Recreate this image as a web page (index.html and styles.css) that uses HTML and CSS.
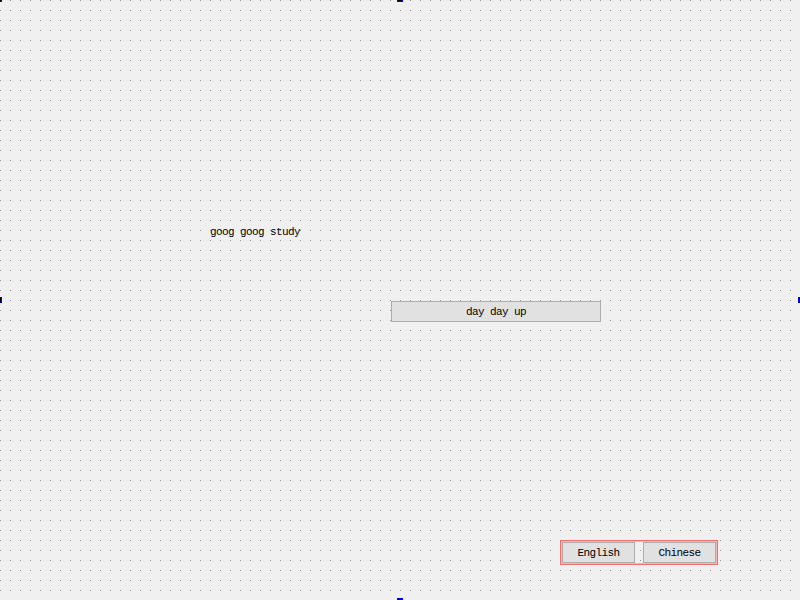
FILE: index.html
```html
<!DOCTYPE html>
<html>
<head>
<meta charset="utf-8">
<link rel="stylesheet" href="styles.css">
</head>
<body>
<div class="form">
  <div class="label">goog goog study</div>
  <div class="btn btn-wide">day day up</div>
  <div class="hlayout">
    <div class="btn btn-small">English</div>
    <div class="btn btn-small">Chinese</div>
  </div>
  <div class="handle h-tl"></div>
  <div class="handle h-tc"></div>
  <div class="handle h-ml"></div>
  <div class="handle h-mr"></div>
  <div class="handle h-bc"></div>
</div>
</body>
</html>
```
FILE: styles.css
```css
html, body {
  margin: 0;
  padding: 0;
  background: #f0f0f0;
}
.form {
  position: relative;
  width: 800px;
  height: 600px;
  overflow: hidden;
  background-color: #f0f0f0;
  background-image:
    linear-gradient(to right, transparent 1px, #f0f0f0 1px),
    linear-gradient(to bottom, #9a9a9a 1px, transparent 1px);
  background-size: 10px 10px;
  font-family: "Liberation Mono", "DejaVu Sans Mono", monospace;
  font-size: 11px;
  letter-spacing: -0.6px;
  color: #000;
}
.label {
  position: absolute;
  left: 210px;
  top: 224px;
  line-height: 16px;
}
.btn {
  box-sizing: border-box;
  background: #e1e1e1;
  border: 1px solid #adadad;
  display: flex;
  align-items: center;
  justify-content: center;
  line-height: 14px;
}
.btn-wide {
  position: absolute;
  left: 391px;
  top: 301px;
  width: 210px;
  height: 21px;
}
.hlayout {
  position: absolute;
  left: 560px;
  top: 540px;
  width: 158px;
  height: 25px;
  box-sizing: border-box;
  border: 1px solid #f07070;
  box-shadow: inset 0 0 0 1px #f8b4b4;
  display: flex;
  gap: 8px;
  padding: 1px 1px;
  align-items: center;
}
.btn-small {
  width: 73px;
  height: 21px;
}
.handle {
  position: absolute;
  width: 6px;
  height: 6px;
  box-sizing: border-box;
  background: #000;
  border: 1px solid #0000ff;
}
.h-tl { left: -4px; top: -4px; }
.h-tc { left: 397px; top: -4px; }
.h-ml { left: -4px; top: 297px; }
.h-mr { left: 798px; top: 297px; }
.h-bc { left: 397px; top: 598px; }
```
